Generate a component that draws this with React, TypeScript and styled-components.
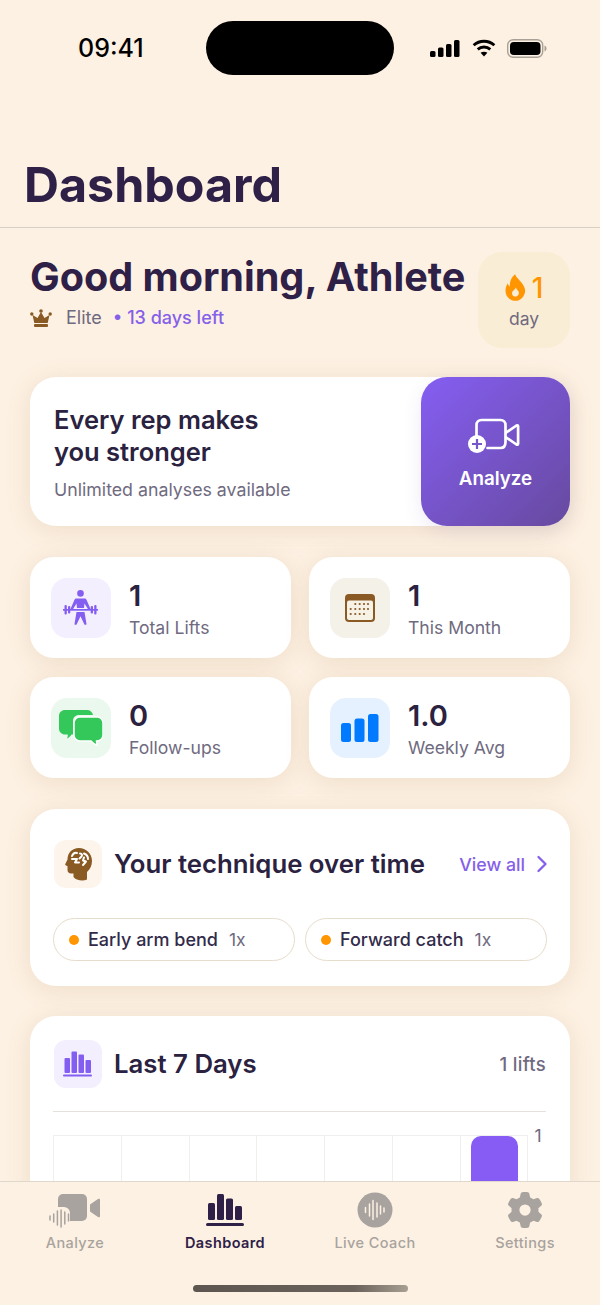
import React from "react";
import styled, { createGlobalStyle } from "styled-components";
import { ChevronRight } from "lucide-react";
import { FaGear } from "react-icons/fa6";

const GlobalStyle = createGlobalStyle`
  html, body {
    margin: 0;
    padding: 0;
    background: #fdf1e3;
  }
  * {
    box-sizing: border-box;
  }
`;

// layout
//--------------------------
const Screen = styled.div`
  width: 600px;
  height: 1305px;
  display: flex;
  flex-direction: column;
  overflow: hidden;
  background: #fdf1e3;
  font-family: Inter, "Liberation Sans", sans-serif;
  color: #2a2240;
`;

const StatusBar = styled.div`
  height: 130px;
  flex: none;
  padding-top: 21px;
  display: grid;
  grid-template-columns: 206px 188px 206px;
  align-items: start;
`;

const Clock = styled.div`
  padding-left: 78px;
  font-size: 25px;
  line-height: 54px;
  font-weight: 500;
  color: #000;
`;

const Island = styled.div`
  height: 54px;
  border-radius: 27px;
  background: #000;
`;

const StatusIcons = styled.div`
  height: 54px;
  padding-right: 53px;
  display: flex;
  align-items: center;
  justify-content: flex-end;
  gap: 10.5px;
`;

const Header = styled.header`
  flex: none;
  height: 98px;
  padding: 26px 24px 0;
  border-bottom: 1px solid #d9d0c5;
`;

const PageTitle = styled.h1`
  margin: 0;
  font-size: 48.4px;
  line-height: 58px;
  font-weight: 700;
  color: #2e2047;
`;

const Content = styled.main`
  flex: 1;
  min-height: 0;
  overflow: hidden;
  padding: 24px 30px 0;
  display: flex;
  flex-direction: column;
`;

// greeting
//--------------------------
const GreetingRow = styled.section`
  display: flex;
  justify-content: space-between;
  align-items: flex-start;
  height: 96px;
  margin-bottom: 29px;
`;

const Greeting = styled.h2`
  margin: 0;
  font-size: 39.6px;
  line-height: 50px;
  font-weight: 700;
  white-space: nowrap;
  color: #2e2047;
`;

const PlanRow = styled.div`
  margin-top: 4px;
  display: flex;
  align-items: center;
  font-size: 18px;
  line-height: 24px;
`;

const PlanName = styled.span`
  margin-left: 14px;
  color: #6f6a80;
`;

const PlanDays = styled.span`
  margin-left: 11px;
  color: #8560e8;
  font-weight: 500;
`;

const StreakTile = styled.div`
  width: 92px;
  height: 96px;
  border-radius: 24px;
  background: #faedd5;
  display: flex;
  flex-direction: column;
  align-items: center;
  justify-content: center;
  gap: 3px;
`;

const StreakValue = styled.div`
  display: flex;
  align-items: center;
  gap: 6px;
  font-size: 28px;
  line-height: 34px;
  font-weight: 500;
  color: #ff9500;
`;

const StreakUnit = styled.div`
  font-size: 17.5px;
  line-height: 22px;
  color: #6f6a80;
`;

// hero
//--------------------------
const Card = styled.section`
  background: #fff;
  border-radius: 26px;
  box-shadow: 0 4px 24px rgba(160, 120, 60, 0.16);
`;

const HeroCard = styled(Card)`
  height: 149px;
  flex: none;
  display: flex;
  justify-content: space-between;
  margin-bottom: 31px;
`;

const HeroText = styled.div`
  padding: 27px 0 0 24px;
`;

const HeroTitle = styled.h3`
  margin: 0;
  font-size: 25.5px;
  line-height: 32px;
  font-weight: 600;
  color: #2a2240;
`;

const HeroSub = styled.p`
  margin: 10px 0 0;
  font-size: 17.75px;
  line-height: 24px;
  color: #6f6a80;
`;

const AnalyzeButton = styled.button`
  width: 149px;
  height: 149px;
  border: 0;
  padding: 41px 0 0;
  border-radius: 26px;
  background: linear-gradient(135deg, #855ef2 0%, #674a9f 100%);
  box-shadow: 0 6px 18px rgba(110, 80, 170, 0.12);
  color: #fff;
  font-family: inherit;
  font-size: 18.8px;
  font-weight: 600;
  display: flex;
  flex-direction: column;
  align-items: center;
  gap: 13px;
`;

// stats
//--------------------------
const StatsGrid = styled.div`
  flex: none;
  display: grid;
  grid-template-columns: 261px 261px;
  grid-auto-rows: 101px;
  column-gap: 18px;
  row-gap: 19px;
  margin-bottom: 31px;
`;

const StatCard = styled(Card)`
  border-radius: 24px;
  display: flex;
  align-items: center;
  gap: 18px;
  padding-left: 21px;
`;

const IconTile = styled.div<{ $bg: string; $size?: number; $radius?: number }>`
  width: ${(p) => p.$size ?? 60}px;
  height: ${(p) => p.$size ?? 60}px;
  flex: none;
  border-radius: ${(p) => p.$radius ?? 16}px;
  background: ${(p) => p.$bg};
  display: flex;
  align-items: center;
  justify-content: center;
`;

const StatText = styled.div`
  padding-top: 2px;
`;

const StatValue = styled.div`
  font-size: 29px;
  line-height: 36px;
  font-weight: 600;
  color: #2a2240;
`;

const StatLabel = styled.div`
  margin-top: 2px;
  font-size: 17.6px;
  line-height: 24px;
  color: #6f6a80;
`;

// technique + chart cards
//--------------------------
const TechniqueCard = styled(Card)`
  flex: none;
  height: 177px;
  padding: 31px 23px 0;
  margin-bottom: 30px;
`;

const CardHeader = styled.div`
  display: flex;
  align-items: center;
  gap: 12px;
  padding-left: 1px;
`;

const CardTitle = styled.h3`
  flex: 1;
  margin: 0;
  font-size: 25.75px;
  line-height: 48px;
  font-weight: 600;
  white-space: nowrap;
  color: #2a2240;
`;

const ViewAll = styled.a`
  display: flex;
  align-items: center;
  gap: 3px;
  margin-right: -9px;
  font-size: 17.8px;
  font-weight: 500;
  color: #8560e8;
`;

const PillRow = styled.div`
  display: flex;
  gap: 10px;
  margin-top: 30px;
`;

const Pill = styled.div`
  width: 242px;
  height: 43px;
  border: 1.5px solid #e6dccb;
  border-radius: 22px;
  display: flex;
  align-items: center;
  padding-left: 15px;
  font-size: 18px;
  font-weight: 500;
  color: #322b49;
`;

const Dot = styled.span`
  width: 10px;
  height: 10px;
  border-radius: 50%;
  background: #ff9500;
  margin-right: 9px;
`;

const PillCount = styled.span`
  margin-left: 11px;
  font-size: 17.5px;
  font-weight: 400;
  color: #6f6a80;
`;

const ChartCard = styled(Card)`
  flex: none;
  height: 300px;
  padding: 24px 24px 0 23px;
`;

const LiftCount = styled.span`
  font-size: 18.5px;
  letter-spacing: 0.3px;
  font-weight: 500;
  color: #6f6a80;
`;

const Divider = styled.div`
  height: 1px;
  margin-top: 23px;
  background: #e5e2de;
`;

const ChartRow = styled.div`
  display: flex;
  margin-top: 23px;
`;

const ChartCell = styled.div`
  width: 67.8px;
  height: 120px;
  border-left: 1px solid #f0efed;
  border-top: 1px solid #f0efed;
  display: flex;
  justify-content: center;
  &:nth-child(7) {
    border-right: 1px solid #f0efed;
  }
`;

const Bar = styled.div`
  width: 47px;
  height: 100%;
  margin-left: 1px;
  background: #865cf5;
  border-radius: 10px 10px 0 0;
`;

const AxisLabel = styled.span`
  margin: -9px 0 0 7px;
  font-size: 17.5px;
  line-height: 20px;
  color: #6f6a80;
`;

// tab bar
//--------------------------
const TabBar = styled.nav`
  flex: none;
  height: 124px;
  background: #fdf1e3;
  border-top: 1px solid #e0d8cc;
  position: relative;
  display: flex;
  flex-direction: column;
  align-items: center;
`;

const Tabs = styled.div`
  width: 100%;
  display: grid;
  grid-template-columns: repeat(4, 150px);
  padding-top: 9px;
`;

const Tab = styled.div<{ $active?: boolean }>`
  display: flex;
  flex-direction: column;
  align-items: center;
  gap: 4px;
  font-size: 14.5px;
  line-height: 20px;
  font-weight: ${(p) => (p.$active ? 600 : 500)};
  letter-spacing: 0.4px;
  color: ${(p) => (p.$active ? "#2e2047" : "#a8a39e")};
`;

const TabIcon = styled.div`
  height: 38px;
  display: flex;
  align-items: center;
  justify-content: center;
`;

const HomeBar = styled.div`
  width: 215px;
  height: 7px;
  margin-top: 32px;
  border-radius: 4px;
  background: linear-gradient(90deg, #5d5650 0%, #6a625b 75%, #a89f92 100%);
`;

// icons
//--------------------------
const SignalIcon = () => (
  <svg width="30" height="17" viewBox="0 0 30 17" fill="#000">
    <rect x="0" y="11" width="5.500" height="6" rx="1.500" />
    <rect x="8" y="7.500" width="5.500" height="9.500" rx="1.500" />
    <rect x="16" y="4" width="5.500" height="13" rx="1.500" />
    <rect x="24" y="0" width="5.500" height="17" rx="1.500" />
  </svg>
);

const WifiIcon = () => (
  <svg width="26" height="18" viewBox="0 0 26 20" fill="none" stroke="#000" strokeWidth="3.200">
    <path d="M1.500 7C8 1 18 1 24.500 7" />
    <path d="M6 11.500c4-3.500 10-3.500 14 0" />
    <path d="M13 19.500l-3.800-4.200c2.200-1.600 5.400-1.600 7.600 0z" fill="#000" stroke="none" />
  </svg>
);

const BatteryIcon = () => (
  <svg width="40" height="19" viewBox="0 0 40 19">
    <rect x="0.700" y="0.700" width="35" height="17.600" rx="5.500" fill="none" stroke="#a8a296" strokeWidth="1.400" />
    <rect x="3" y="3" width="30.500" height="13" rx="3.800" fill="#000" />
    <path d="M37.500 6.500c1.200.4 2 1.500 2 3s-.8 2.600-2 3z" fill="#a8a296" />
  </svg>
);

const CrownIcon = () => (
  <svg width="22" height="19" viewBox="0 0 22 19" fill="#8a5a24">
    <circle cx="11" cy="2" r="1.800" />
    <circle cx="1.800" cy="5" r="1.700" />
    <circle cx="20.200" cy="5" r="1.700" />
    <path d="M11 3l3.500 6 5-3-1.800 8H4.300L2.500 6l5 3z" />
    <rect x="4" y="15" width="14" height="3" rx="1" />
  </svg>
);

const FlameIcon = () => (
  <svg width="21" height="27" viewBox="0 0 22 28">
    <path
      d="M10.500 0c1.200 3.500 4 5 6.500 8.500 3.500 4.500 5 8 3.500 12-1.500 4.500-5.500 7.500-9.500 7.500S3 25.500 1.300 21.500C-.2 17.500.5 13 3 9.500c.3 1.500 1 2.800 2.200 3.500C4.500 8.500 6.500 3 10.500 0z"
      fill="#ff9500"
    />
    <path
      d="M11.500 14c.5 1.800 2 2.800 2.800 4.500.9 2.200-.6 5-3.300 5-2.800 0-4.300-2.500-3.400-4.800.8-1.800 3-2.500 3.900-4.700z"
      fill="#faedd5"
    />
  </svg>
);

const VideoPlusIcon = () => (
  <svg width="52" height="36" viewBox="2.500 0 52 36" overflow="visible" fill="none" stroke="#fff" strokeWidth="2.700" strokeLinejoin="round">
    <path d="M9 18V7c0-3 2-5 5-5h19c3 0 5 2 5 5v17c0 4-2 6-5 6H20" strokeLinecap="round" />
    <path d="M38 15l11-7.500c1-.6 1.600 0 1.600 1v17c0 1-.6 1.600-1.600 1L38 19" />
    <circle cx="9.500" cy="26" r="9" fill="#fff" stroke="none" />
    <path d="M9.500 21v10M4.500 26h10" stroke="#7656c8" strokeWidth="2.200" />
  </svg>
);

const LifterIcon = () => (
  <svg width="36" height="36" viewBox="0 0 36 36" fill="#845ef0">
    <circle cx="17.500" cy="3.400" r="3.300" />
    <path d="M13.500 8.500h8c1 0 1.600.5 2 1.300L27.500 19h-2.600l-3.400-5.500-.5 4.500H14l-.5-4.500L10.100 19H7.500l4-9.200c.4-.8 1-1.300 2-1.300z" />
    <rect x="0" y="19" width="35" height="1.700" />
    <rect x="1.500" y="15" width="2.300" height="9.500" rx="1" />
    <rect x="5" y="16" width="2.300" height="7.500" rx="1" />
    <rect x="27.700" y="16" width="2.300" height="7.500" rx="1" />
    <rect x="31.200" y="15" width="2.300" height="9.500" rx="1" />
    <path d="M13.500 22h8l2 12c.1 1-1.900 1.200-2.200.2l-3.800-8-3.800 8c-.3 1-2.300.8-2.200-.2z" />
  </svg>
);

const CalendarIcon = () => {
  const dots = [
    [10.300, 10], [14.700, 10], [19, 10], [23, 10],
    [5.700, 15], [10.300, 15], [14.700, 15], [19, 15], [23, 15],
    [5.700, 20], [10.300, 20], [14.700, 20], [19, 20],
  ];
  return (
    <svg width="30" height="28" viewBox="0 0 30 28">
      <rect x="0" y="0" width="30" height="28" rx="4" fill="#8a5a24" />
      <rect x="2" y="6.500" width="26" height="19.500" rx="2" fill="#f7f2e6" />
      {dots.map(([x, y]) => (
        <circle key={`${x}-${y}`} cx={x} cy={y} r="1.100" fill="#8a5a24" />
      ))}
    </svg>
  );
};

const ChatIcon = () => (
  <svg width="44" height="36" viewBox="0 0 44 36" fill="#34c759">
    <path d="M6 0h22c3 0 5.500 2 6 5H20c-3.500 0-6 2.500-6 6v13.500h-1.500c-1 1.800-2.500 3.200-4.500 4 .7-1.300 1-2.700.8-4H6c-3.300 0-6-2.500-6-6V6c0-3.500 2.700-6 6-6z" />
    <path d="M21 7h17c3.300 0 6 2.500 6 6v12c0 3.500-2.700 6-6 6h-.5c0 1.800.3 3 1 4.500-2.500-.8-4.800-2.300-6.500-4.500H21c-3.300 0-6-2.500-6-6V13c0-3.500 2.700-6 6-6z" stroke="#fff" strokeWidth="1.500" />
  </svg>
);

const WeekBarsIcon = () => (
  <svg width="38" height="28" viewBox="0 0 38 28" fill="#007aff">
    <rect x="0" y="9" width="10" height="19" rx="2.500" />
    <rect x="13.500" y="4.500" width="10" height="23.500" rx="2.500" />
    <rect x="27" y="0" width="10.500" height="28" rx="2.500" />
  </svg>
);

const BrainHeadIcon = () => (
  <svg width="27" height="33" viewBox="0 0 27 33">
    <path
      d="M14 0C7 0 2.500 5 2.500 11.500L.3 16c-.4 1 .2 1.500 2.200 2v4c0 2.300 1.500 3.500 3.500 3.500h2.500V29c2 3 9 4.500 13.500 2.500V24c3-2.500 5-6.500 5-11C27 5.500 21 0 14 0z"
      fill="#8a5a24"
    />
    <g fill="none" stroke="#fff" strokeWidth="2" strokeLinecap="round" strokeLinejoin="round">
      <path d="M7 8c1-2.500 3-3.500 5-3" />
      <path d="M7 11h5l-2 3.500h4" />
      <path d="M15 5.500c2 0 2.500 1.500 1.500 3l-2 2" />
      <path d="M19 5.500c2.500 1 4 3 4 5.500" />
      <path d="M19 9.500l-1 3 3 1-3 3.500" />
    </g>
  </svg>
);

const DaysIcon = () => (
  <svg width="30" height="26" viewBox="0 0 30 26" fill="#845ef0">
    <rect x="1.500" y="7" width="5.500" height="15" rx="1" />
    <rect x="8.500" y="0.500" width="5.500" height="21.500" rx="1" />
    <rect x="15.500" y="3.500" width="5.500" height="18.500" rx="1" />
    <rect x="22.500" y="9" width="5.500" height="13" rx="1" />
    <rect x="0" y="23.500" width="29" height="2" rx="1" />
  </svg>
);

const TabVideoIcon = () => (
  <svg width="52" height="36" viewBox="0 0 52 36" fill="#a8a39e">
    <rect x="9" y="2" width="29" height="27" rx="5" />
    <path d="M41 12.500l8-5.500c1.200-.7 2-.2 2 1v16c0 1.200-.8 1.700-2 1l-8-5.500z" />
    <rect x="-1" y="15" width="22" height="21" fill="#fdf1e3" rx="6" />
    <g stroke="#a8a39e" strokeWidth="1.500" strokeLinecap="round">
      <path d="M1 24v4M4.700 22v8M8.400 19v14M12.100 18v17M15.800 20v12M19.500 22v7" />
    </g>
  </svg>
);

const TabDashboardIcon = () => (
  <svg width="38" height="32" viewBox="0 0 38 32" fill="#2e2047">
    <rect x="2" y="9" width="7" height="17" rx="1.500" />
    <rect x="11" y="0" width="7" height="26" rx="1.500" />
    <rect x="20" y="4.500" width="7" height="21.500" rx="1.500" />
    <rect x="29" y="12" width="7" height="14" rx="1.500" />
    <rect x="0" y="29" width="38" height="3" rx="1.500" />
  </svg>
);

const TabCoachIcon = () => (
  <svg width="36" height="36" viewBox="0 0 36 36">
    <circle cx="18" cy="18" r="17.500" fill="#a8a39e" />
    <g stroke="#fdf1e3" strokeWidth="1.500" strokeLinecap="round">
      <path d="M8.500 15.500v5M12.500 12v12M16 8.500v19M20 11v14M23.500 14v8M27 16v4" />
    </g>
  </svg>
);

// data
//--------------------------
const stats = [
  { value: "1", label: "Total Lifts", bg: "#f3effe", icon: <LifterIcon /> },
  { value: "1", label: "This Month", bg: "#f4f1e9", icon: <CalendarIcon /> },
  { value: "0", label: "Follow-ups", bg: "#ebf8ee", icon: <ChatIcon /> },
  { value: "1.0", label: "Weekly Avg", bg: "#e5f1ff", icon: <WeekBarsIcon /> },
];

const patterns = ["Early arm bend", "Forward catch"];

const days = [0, 0, 0, 0, 0, 0, 1];

const tabs = [
  { label: "Analyze", icon: <TabVideoIcon /> },
  { label: "Dashboard", icon: <TabDashboardIcon />, active: true },
  { label: "Live Coach", icon: <TabCoachIcon /> },
  { label: "Settings", icon: <FaGear size={36} color="#a8a39e" /> },
];

const App = () => {
  return (
    <Screen>
      <GlobalStyle />
      <StatusBar>
        <Clock>09:41</Clock>
        <Island />
        <StatusIcons>
          <SignalIcon />
          <WifiIcon />
          <BatteryIcon />
        </StatusIcons>
      </StatusBar>

      <Header>
        <PageTitle>Dashboard</PageTitle>
      </Header>

      <Content>
        <GreetingRow>
          <div>
            <Greeting>Good morning, Athlete</Greeting>
            <PlanRow>
              <CrownIcon />
              <PlanName>Elite</PlanName>
              <PlanDays>• 13 days left</PlanDays>
            </PlanRow>
          </div>
          <StreakTile>
            <StreakValue>
              <FlameIcon />1
            </StreakValue>
            <StreakUnit>day</StreakUnit>
          </StreakTile>
        </GreetingRow>

        <HeroCard>
          <HeroText>
            <HeroTitle>
              Every rep makes
              <br />
              you stronger
            </HeroTitle>
            <HeroSub>Unlimited analyses available</HeroSub>
          </HeroText>
          <AnalyzeButton>
            <VideoPlusIcon />
            Analyze
          </AnalyzeButton>
        </HeroCard>

        <StatsGrid>
          {stats.map((s) => (
            <StatCard key={s.label}>
              <IconTile $bg={s.bg}>{s.icon}</IconTile>
              <StatText>
                <StatValue>{s.value}</StatValue>
                <StatLabel>{s.label}</StatLabel>
              </StatText>
            </StatCard>
          ))}
        </StatsGrid>

        <TechniqueCard>
          <CardHeader>
            <IconTile $bg="#fdf5ec" $size={48} $radius={12}>
              <BrainHeadIcon />
            </IconTile>
            <CardTitle>Your technique over time</CardTitle>
            <ViewAll>
              View all
              <ChevronRight size={28} strokeWidth={2} />
            </ViewAll>
          </CardHeader>
          <PillRow>
            {patterns.map((p) => (
              <Pill key={p}>
                <Dot />
                {p}
                <PillCount>1x</PillCount>
              </Pill>
            ))}
          </PillRow>
        </TechniqueCard>

        <ChartCard>
          <CardHeader>
            <IconTile $bg="#f3effe" $size={48} $radius={12}>
              <DaysIcon />
            </IconTile>
            <CardTitle>Last 7 Days</CardTitle>
            <LiftCount>1 lifts</LiftCount>
          </CardHeader>
          <Divider />
          <ChartRow>
            {days.map((d, i) => (
              <ChartCell key={i}>{d > 0 && <Bar />}</ChartCell>
            ))}
            <AxisLabel>1</AxisLabel>
          </ChartRow>
        </ChartCard>
      </Content>

      <TabBar>
        <Tabs>
          {tabs.map((t) => (
            <Tab key={t.label} $active={t.active}>
              <TabIcon>{t.icon}</TabIcon>
              {t.label}
            </Tab>
          ))}
        </Tabs>
        <HomeBar />
      </TabBar>
    </Screen>
  );
};

export default App;
